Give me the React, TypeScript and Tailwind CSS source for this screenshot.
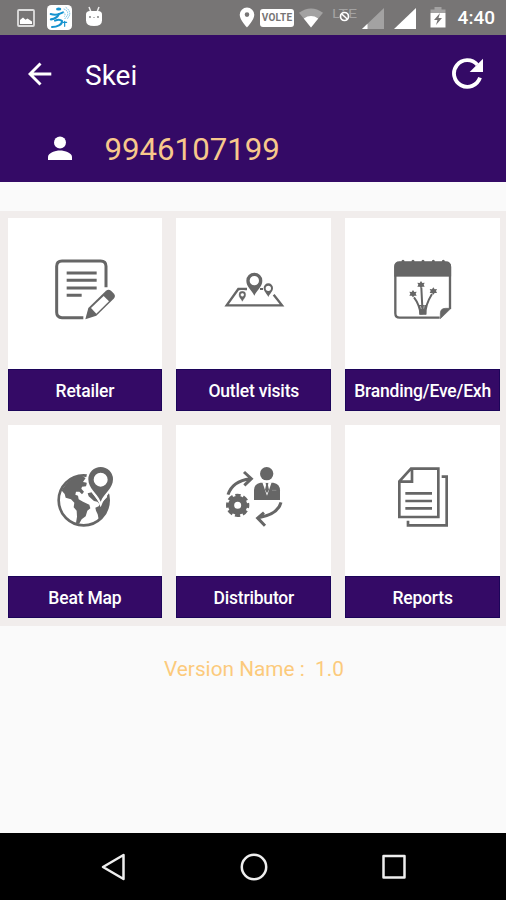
import React from "react";

type IconProps = {
    className?: string;
};

const GalleryIcon = ({ className }: IconProps) => (
    <svg className={className} viewBox="0 0 18 18" fill="none">
        <rect x="1" y="1" width="16" height="16" rx="1" stroke="#dedede" strokeWidth="1.8" />
        <path d="M3 15v-4l3-2.4 2.5 2.2 2-1.2 4.5 3V15z" fill="#fff" />
    </svg>
);

const RunnerIcon = ({ className }: IconProps) => (
    <svg className={className} viewBox="0 0 75 75" fill="none">
        <rect width="75" height="75" rx="13" fill="#fff" />
        <ellipse cx="35" cy="12" rx="8" ry="4.500" fill="#1593cf" />
        <g stroke="#1593cf" strokeLinecap="round">
            <path d="M11 27q16 5 30-2l7-3" strokeWidth="6" />
            <path d="M35 28q-5 12-23 15" strokeWidth="7" />
            <path d="M24 47q14-6 21 1q1 8-9 13-9 5-21 5" strokeWidth="6" />
            <path d="M53 49v15M48 52h11" strokeWidth="3.500" />
        </g>
        <g stroke="#6fc0e6" strokeWidth="3" strokeDasharray="5 2">
            <path d="M50 12q14 4 12 18l-9 12" />
            <path d="M56 7q14 9 12 23l-7 12" />
            <path d="M49 21q8 5 3 14" />
        </g>
    </svg>
);

const RobotIcon = ({ className }: IconProps) => (
    <svg className={className} viewBox="0 0 18 21">
        <path d="M4 1l2 5M14 1l-2 5" stroke="#eee" strokeWidth="1.500" />
        <path d="M1 8.500q0-3.500 4-3.500h8q4 0 4 3.500v6q0 5.500-8 5.500t-8-5.500z" fill="#fff" />
        <circle cx="5" cy="11" r="0.900" fill="#777" />
        <circle cx="13" cy="11" r="0.900" fill="#777" />
        <path d="M8 11.500h2" stroke="#bbb" />
    </svg>
);

const PinIcon = ({ className }: IconProps) => (
    <svg className={className} viewBox="0 0 16 21">
        <path fillRule="evenodd" d="M8 .5a7.300 7.300 0 0 0-7.300 7.300C.7 13 8 20.500 8 20.500S15.300 13 15.300 7.800A7.300 7.300 0 0 0 8 .5zm0 4.800a2.300 2.300 0 1 1 0 4.600 2.300 2.300 0 0 1 0-4.600z" fill="#fff" />
    </svg>
);

const WifiIcon = ({ className }: IconProps) => (
    <svg className={className} viewBox="0 0 24 20">
        <path d="M0 4.800Q12-4 24 4.800L12 19.500z" fill="#a3a2a2" />
        <path d="M4.800 10.500Q12 5.700 19.200 10.500L12 19.500z" fill="#fff" />
    </svg>
);

const LteIcon = ({ className }: IconProps) => (
    <svg className={className} viewBox="0 0 28 20">
        <text x="1" y="14" fontSize="13" textLength="25" lengthAdjust="spacingAndGlyphs" fontFamily="Roboto, sans-serif" fill="#a3a2a2">LTE</text>
        <circle cx="13.500" cy="12.500" r="5.300" fill="#777575" />
        <circle cx="13.500" cy="12.500" r="4" fill="none" stroke="#fff" strokeWidth="1.700" />
        <path d="M10.800 10l5.400 5" stroke="#fff" strokeWidth="1.500" />
    </svg>
);

const SignalIcon = ({ className, weak }: IconProps & { weak?: boolean }) => (
    <svg className={className} viewBox="0 0 22 21">
        <path d="M22 0v21H0z" fill={weak ? "#a3a2a2" : "#fff"} />
        {weak && <path d="M5.500 15.700V21H0z" fill="#fff" />}
    </svg>
);

const BatteryIcon = ({ className }: IconProps) => (
    <svg className={className} viewBox="0 0 16 21">
        <path d="M.5 6V2.500h4V0h7v2.500h4V6z" fill="#a3a2a2" />
        <path d="M.5 6h15v14.500H.5z" fill="#fff" />
        <path d="M10 6l-6 7h3.500l-1.500 5 6-7H8.500z" fill="#777575" />
    </svg>
);

const BackIcon = ({ className }: IconProps) => (
    <svg className={className} viewBox="0 0 24 24" fill="none" stroke="#fff" strokeWidth="2.900">
        <path d="M23.300 12H3M12.500 1.500L2 12l10.500 10.500" />
    </svg>
);

const RefreshIcon = ({ className }: IconProps) => (
    <svg className={className} viewBox="0 0 96 96">
        <path d="M76 20A40 40 0 1 0 84 59" fill="none" stroke="#fff" strokeWidth="11.500" />
        <path d="M93 2v40H53z" fill="#fff" />
    </svg>
);

const PersonIcon = ({ className }: IconProps) => (
    <svg className={className} viewBox="0 0 24 24" fill="#fff">
        <circle cx="12" cy="6.500" r="6" />
        <path d="M0 24v-3c0-4 7-6.500 12-6.500S24 17 24 21v3z" />
    </svg>
);

const RetailerIcon = ({ className }: IconProps) => (
    <svg className={className} viewBox="0 0 270 270" fill="none" stroke="#666" strokeWidth="9">
        <path d="M130 218H66Q50 218 50 202V64Q50 48 66 48H182Q198 48 198 64V127" />
        <path d="M80 84h90M80 106h90M80 129h90M80 151h45" />
        <path d="M136 223l9-34 53-52q8-6 16 1l8 8q6 8-1 15l-52 51z" fill="#666" stroke="none" />
        <path d="M153 189l38-36 16 16-38 37z" fill="#fff" stroke="none" />
    </svg>
);

const OutletIcon = ({ className }: IconProps) => (
    <svg className={className} viewBox="-4 0 270 270" fill="none" stroke="#666">
        <path d="M110 132H84L49 181H215L190 149" strokeWidth="7" />
        <path d="M149 132h9" strokeWidth="6" />
        <path d="M96 135a14 14 0 0 0-14 14c0 12 10 16 14 27 4-11 14-15 14-27a14 14 0 0 0-14-14z" fill="#fff" stroke="none" />
        <path fillRule="evenodd" d="M132 83a24 24 0 0 0-24 24c0 18 17 29 24 45 7-16 24-27 24-45a24 24 0 0 0-24-24zm0 10a14 14 0 1 1 0 28 14 14 0 0 1 0-28z" fill="#666" stroke="none" />
        <path fillRule="evenodd" d="M174 115a14 14 0 0 0-14 14c0 11 10 17 14 27 4-10 14-16 14-27a14 14 0 0 0-14-14zm0 7a8 8 0 1 1 0 16 8 8 0 0 1 0-16z" fill="#666" stroke="none" />
        <path fillRule="evenodd" d="M96 139a10 10 0 0 0-10 10c0 9 7 12 10 20 3-8 10-11 10-20a10 10 0 0 0-10-10zm0 5a5.500 5.500 0 1 1 0 11 5.500 5.500 0 0 1 0-11z" fill="#666" stroke="#666" strokeWidth="1" />
    </svg>
);

const BrandingIcon = ({ className }: IconProps) => (
    <svg className={className} viewBox="-1 0 270 270" fill="none" stroke="#666">
        <path d="M184 218H64Q51 218 51 205V65Q51 52 64 52H202Q215 52 215 65V192" strokeWidth="7" />
        <path d="M49 94V66Q49 52 63 52H203Q217 52 217 66V94z" fill="#666" strokeWidth="2" />
        <path d="M74 49v6M104 49v6M134 49v6M165 49v6M195 49v6" strokeWidth="9" strokeLinecap="round" />
        <path d="M186 221V205Q186 190 202 190h16z" fill="#666" strokeWidth="2" />
        <path d="M127 208Q123 178 107 157M133 208L129 128M141 208q0-29 20-61" strokeWidth="6" />
        <path d="M122 180h21l1 29h-21z" fill="#666" stroke="none" />
        <path d="M138 181l-2 10M126 183l3 9" stroke="#fff" strokeWidth="1.500" />
        <g fill="#666" stroke="none">
            <path d="M104 135l4 6 7-1-3 6 3 6-7 0-4 5-4-5-7 0 3-6-3-6 7 1z" />
            <path d="M128 108l4 6 7-1-3 6 3 6-7 0-4 5-4-5-7 0 3-6-3-6 7 1z" />
            <path d="M165 127l4 6 7-1-3 6 3 6-7 0-4 5-4-5-7 0 3-6-3-6 7 1z" />
        </g>
    </svg>
);

const BeatMapIcon = ({ className }: IconProps) => (
    <svg className={className} viewBox="0 0 270 270" fill="#666">
        <circle cx="131" cy="145" r="75" fill="none" stroke="#666" strokeWidth="8" />
        <path d="M67 112Q88 75 125 72l12 6-8 12 12 2-3 11-12 1-2 6 8 9-6 8-8-8h-10l-2 9 8 3 2 11 13 7 19 9 3 11-9 7-5 17-12 9-8 14-9-4 3-18-1-18-9-10 2-14-10-10-16-5-3-11-10-11z" />
        <path d="M143 124l12-3 14 18 13 16 22-22q3 45-28 69l-3-15-5-11-2-9 10-4 3-6-7-8-10-2-16-14z" />
        <path d="M182 45a37 37 0 0 0-37 37c0 28 25 39 37 67 12-28 37-39 37-67a37 37 0 0 0-37-37z" fill="#fff" stroke="#fff" strokeWidth="13" />
        <path fillRule="evenodd" d="M182 45a37 37 0 0 0-37 37c0 28 25 39 37 67 12-28 37-39 37-67a37 37 0 0 0-37-37zm0 17a21 21 0 1 1 0 42 21 21 0 0 1 0-42z" />
    </svg>
);

const DistributorIcon = ({ className }: IconProps) => (
    <svg className={className} viewBox="-4 0 270 270" fill="none" stroke="#666" strokeWidth="9">
        <path d="M53 128Q66 87 120 80M101 60l22 20-21 20M212 151Q203 187 145 197M161 182l-19 16 22 23" />
        <circle cx="82" cy="160" r="19.500" strokeWidth="18" />
        <circle cx="82" cy="160" r="29" strokeWidth="12" strokeDasharray="15 7.777" strokeDashoffset="7.500" />
        <circle cx="169" cy="65" r="20" fill="#666" stroke="none" />
        <path d="M131 144V115Q131 96 150 92h39Q209 96 209 115v29z" fill="#666" stroke="none" />
        <path d="M156 91h28l-14 40z" fill="#fff" stroke="none" />
        <path d="M166 93h8l-1 7 3 13-6 11-6-11 3-13z" fill="#666" stroke="none" />
        <path d="M185 115h13" stroke="#888" strokeWidth="3" />
    </svg>
);

const ReportsIcon = ({ className }: IconProps) => (
    <svg className={className} viewBox="-1 0 270 270" fill="none" stroke="#666" strokeWidth="8">
        <path d="M63 88L98 50H180V195H63zM66 89h35V50M190 74H205V220H89V206" />
        <path d="M81 124h80M81 147h80M81 169h80" />
    </svg>
);

const tiles = [
    { label: "Retailer", Icon: RetailerIcon },
    { label: "Outlet visits", Icon: OutletIcon },
    { label: "Branding/Eve/Exh", Icon: BrandingIcon },
    { label: "Beat Map", Icon: BeatMapIcon },
    { label: "Distributor", Icon: DistributorIcon },
    { label: "Reports", Icon: ReportsIcon },
];

const StatusBar = () => (
    <div className="flex h-[35px] items-start bg-[#777575] pr-[11px] pl-[16.5px]">
        <GalleryIcon className="mt-[8.5px] h-[18px] w-[18px]" />
        <RunnerIcon className="mt-[5px] ml-[12.5px] h-[25px] w-[25px]" />
        <RobotIcon className="mt-[5.5px] ml-[12.5px] h-[21px] w-[18px]" />
        <PinIcon className="mt-[7px] ml-auto h-[21px] w-4" />
        <span className="mt-[8.5px] ml-[5.5px] flex h-[18px] w-[34px] items-center justify-center rounded-[3px] bg-white text-[10px] leading-none font-bold tracking-[0.2px] text-[#777575]">VOLTE</span>
        <WifiIcon className="mt-[7.5px] ml-[5px] h-5 w-6" />
        <LteIcon className="mt-[4px] ml-2 h-5 w-7" />
        <SignalIcon weak className="mt-[7.5px] ml-[3px] h-[21px] w-[22px]" />
        <SignalIcon className="mt-[7.5px] ml-[9.5px] h-[21px] w-[22px]" />
        <BatteryIcon className="mt-[7px] ml-3.5 h-[21px] w-4" />
        <span className="mt-[7px] ml-3 text-[19px] leading-[22px] font-medium text-white">4:40</span>
    </div>
);

const Header = () => (
    <div className="h-[147px] bg-[#340a66]">
        <div className="flex h-[78px] items-center pr-[22px] pl-7">
            <BackIcon className="h-6 w-6" />
            <h1 className="mt-[3px] ml-[33px] text-[28px] leading-8 text-white">Skei</h1>
            <RefreshIcon className="ml-auto h-8 w-8" />
        </div>
        <div className="flex h-[69px] items-center pl-[47.5px]">
            <PersonIcon className="h-6 w-6" />
            <span className="mt-[5px] ml-[33px] text-[31.2px] leading-9 text-[#f8c88c]">9946107199</span>
        </div>
    </div>
);

const NavBar = () => (
    <div className="flex h-[67px] items-center justify-between bg-black pr-[98px] pl-[101px]">
        <svg className="h-7 w-7" viewBox="0 0 28 28" fill="none" stroke="#eee" strokeWidth="2.500" strokeLinejoin="round">
            <path d="M2 14L22.500 2v24z" />
        </svg>
        <svg className="mr-[2px] h-7 w-7" viewBox="0 0 28 28" fill="none" stroke="#eee" strokeWidth="2.500">
            <circle cx="14" cy="14" r="12.200" />
        </svg>
        <svg className="h-7 w-7" viewBox="0 0 28 28" fill="none" stroke="#eee" strokeWidth="2.500" strokeLinejoin="round">
            <path d="M3.500 3h21v21.500H3.500z" />
        </svg>
    </div>
);

export default function App() {
    return (
        <div className="flex h-[900px] w-[506px] flex-col bg-[#fafafa] font-['Roboto',sans-serif]">
            <StatusBar />
            <Header />
            <div className="mt-[29px] grid h-[415px] grid-cols-3 gap-x-3.5 gap-y-3.5 bg-[#f1edec] pt-[7px] pr-1.5 pb-2 pl-[7.5px]">
                {tiles.map(({ label, Icon }) => (
                    <div key={label} className="flex h-[193px] flex-col items-center bg-white">
                        <div className="flex h-[151px] items-start pt-[27px]">
                            <Icon className="h-[90px] w-[90px]" />
                        </div>
                        <div className="flex h-[42px] w-full items-center justify-center border border-[#1c0559] bg-[#340a66] pt-[3px] text-[17.5px] leading-none font-medium tracking-[-0.18px] whitespace-nowrap text-white">
                            {label}
                        </div>
                    </div>
                ))}
            </div>
            <p className="mt-[31px] pl-0.5 text-center text-[20.8px] leading-6 whitespace-pre text-[#fcca7c]">Version Name :  1.0</p>
            <div className="mt-auto">
                <NavBar />
            </div>
        </div>
    );
}
